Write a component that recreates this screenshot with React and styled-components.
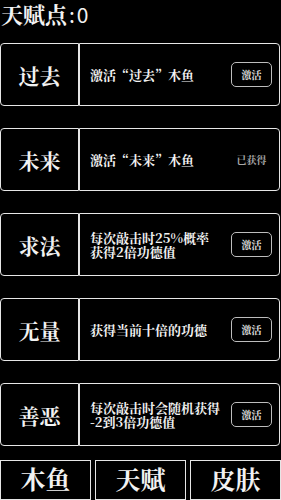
import styled, { createGlobalStyle } from "styled-components";

const GlobalStyle = createGlobalStyle`
    html, body {
        margin: 0;
        padding: 0;
        background: #000;
    }
    body {
        font-family: "Noto Serif CJK SC", "Noto Sans CJK SC", serif;
        color: #f2f2f2;
    }
`;

const talents = [
    { name: "过去", desc: "激活“过去”木鱼", owned: false },
    { name: "未来", desc: "激活“未来”木鱼", owned: true },
    { name: "求法", desc: "每次敲击时25%概率\n获得2倍功德值", owned: false },
    { name: "无量", desc: "获得当前十倍的功德", owned: false },
    { name: "善恶", desc: "每次敲击时会随机获得\n-2到3倍功德值", owned: false }
];

const tabs = ["木鱼", "天赋", "皮肤"];

export default function App() {
    return (
        <Page>
            <GlobalStyle />
            <Header>
                天赋点<Points>:0</Points>
            </Header>
            <List>
                {talents.map(t => (
                    <Card key={t.name}>
                        <NameCell>{t.name}</NameCell>
                        <InfoCell>
                            <Desc>{t.desc}</Desc>
                            {t.owned
                                ? <Owned>已获得</Owned>
                                : <ActivateButton>激活</ActivateButton>}
                        </InfoCell>
                    </Card>
                ))}
            </List>
            <TabBar>
                {tabs.map(t => (
                    <Tab key={t}>{t}</Tab>
                ))}
            </TabBar>
        </Page>
    );
}

const Page = styled.div`
    width: 281px;
    height: 500px;
    overflow: hidden;
    background: #000;
    display: flex;
    flex-direction: column;
`;

const Header = styled.div`
    height: 43px;
    padding-left: 1px;
    font-size: 22px;
    font-weight: 700;
    line-height: 28px;
    display: flex;
    align-items: baseline;
`;

const Points = styled.span`
    font-family: "Noto Sans CJK SC", "DejaVu Sans", sans-serif;
    font-weight: 400;
    font-size: 21px;
    letter-spacing: 2px;
    margin-left: 2px;
`;

const List = styled.div`
    display: flex;
    flex-direction: column;
    gap: 22px;
`;

const Card = styled.div`
    display: flex;
    height: 63px;
    width: 280px;
    box-sizing: border-box;
`;

const NameCell = styled.div`
    width: 79px;
    box-sizing: border-box;
    border: 1.5px solid #e6e6e6;
    border-radius: 4px 0 0 4px;
    display: flex;
    align-items: center;
    justify-content: center;
    font-size: 21px;
    font-weight: 700;
`;

const InfoCell = styled.div`
    flex: 1;
    box-sizing: border-box;
    border: 1.5px solid #e6e6e6;
    border-radius: 0 4px 4px 0;
    display: flex;
    align-items: center;
    justify-content: space-between;
    padding: 0 7px 0 10px;
`;

const Desc = styled.div`
    font-size: 13px;
    font-weight: 700;
    line-height: 14px;
    white-space: pre-line;
`;

const ActivateButton = styled.div`
    flex: none;
    width: 41px;
    height: 25px;
    box-sizing: border-box;
    border: 1.5px solid #bdbdbd;
    border-radius: 5px;
    display: flex;
    align-items: center;
    justify-content: center;
    font-size: 10px;
    font-weight: 700;
    color: #e0e0e0;
`;

const Owned = styled.div`
    flex: none;
    width: 41px;
    text-align: center;
    font-size: 10px;
    font-weight: 700;
    color: #a8a8a8;
`;

const TabBar = styled.div`
    margin-top: 14px;
    display: grid;
    grid-template-columns: repeat(3, 1fr);
    gap: 4px;
`;

const Tab = styled.div`
    height: 40px;
    box-sizing: border-box;
    border: 1.5px solid #e6e6e6;
    display: flex;
    align-items: center;
    justify-content: center;
    font-size: 25px;
    font-weight: 700;
    padding-bottom: 4px;
`;
